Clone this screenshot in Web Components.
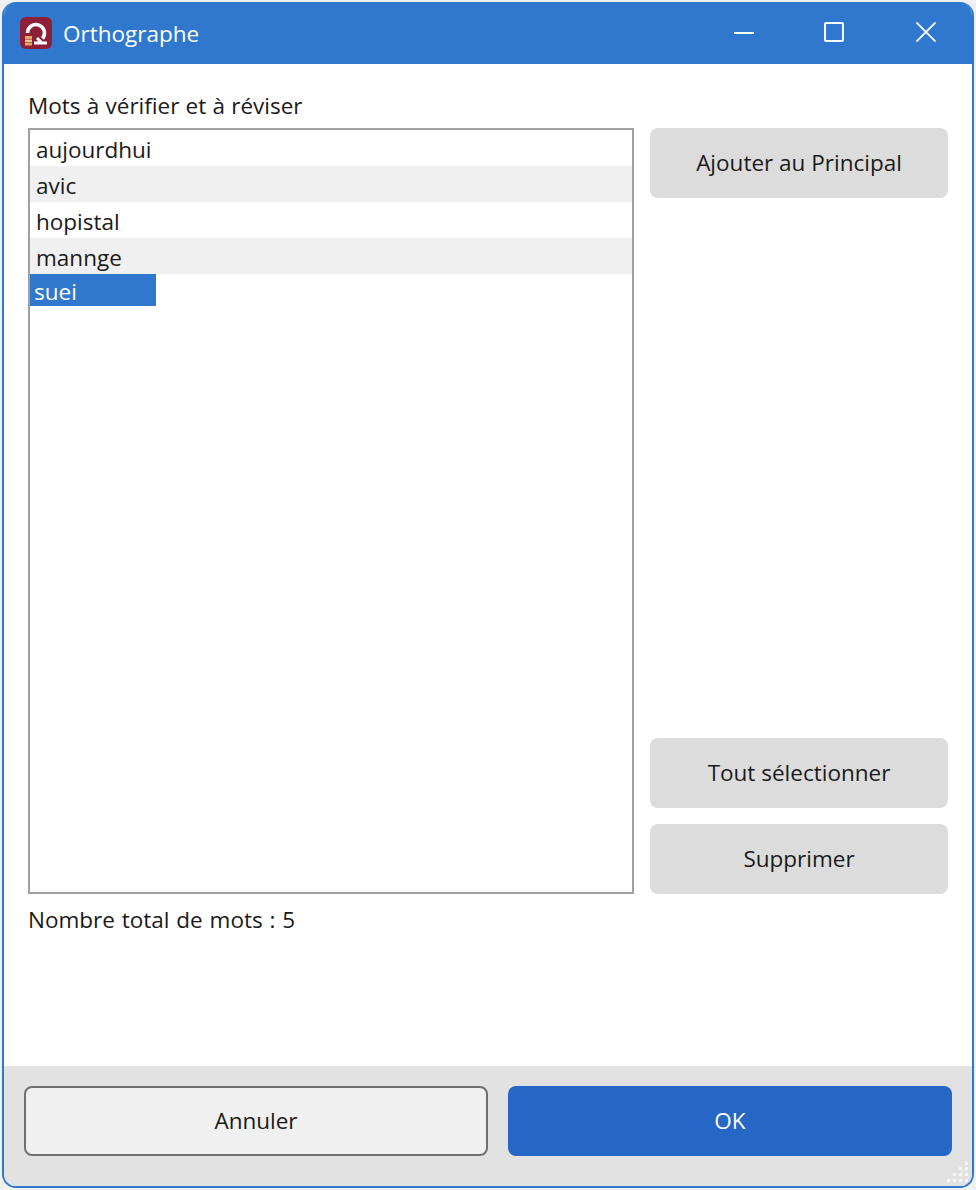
<!DOCTYPE html>
<html lang="fr">
<head>
<meta charset="utf-8">
<title>Orthographe</title>
<style>
    html, body {
        background-color: #f0f0f0;
        height: 100%;
        margin: 0;
    }

    body {
        color: #1a1a1a;
        font-family: "Open Sans", "Noto Sans", sans-serif;
        font-size: 22.5px;
        overflow: hidden;
    }
</style>
</head>
<body>
<spell-dialog></spell-dialog>

<script>
const words = ["aujourdhui", "avic", "hopistal", "mannge", "suei"];

class TitleBar extends HTMLElement {
    constructor(){
        super();
        const shadow = this.attachShadow({ mode: "open" });
        shadow.innerHTML = `
        <style>
        :host{
            align-items: center;
            background-color: #2f78cd;
            color: white;
            display: flex;
            flex: none;
            height: 62px;
            padding-left: 16px;
        }
        .logo{
            flex: none;
            height: 32px;
            margin-right: 11px;
            width: 32px;
        }
        .title{
            flex-grow: 1;
        }
        .window-button{
            display: block;
            height: 20px;
            width: 20px;
        }
        .window-buttons{
            display: flex;
            margin-bottom: 2px;
            margin-right: 36px;
        }
        .window-buttons svg + svg{
            margin-left: 70px;
        }
        .window-buttons svg:last-child{
            margin-left: 72px;
        }
        </style>
        <svg class="logo" viewBox="0 0 32 32">
            <rect width="32" height="32" rx="6" fill="#8f1f36"/>
            <path d="M7.500 16a8.500 8.500 0 1 1 15 5.500" fill="none" stroke="white" stroke-width="3.500"/>
            <path d="M14 26h13M17 21l5 5" fill="none" stroke="white" stroke-width="3"/>
            <rect x="5" y="19" width="7" height="3" fill="#e2a95c"/>
            <rect x="5" y="22.500" width="7" height="2.500" fill="#edc48c"/>
            <rect x="5" y="25.500" width="7" height="3" fill="#e2a95c"/>
        </svg>
        <span class="title"><slot></slot></span>
        <div class="window-buttons">
            <svg class="window-button" viewBox="0 0 20 20"><path d="M0 11h20" stroke="white" stroke-width="2"/></svg>
            <svg class="window-button" viewBox="0 0 20 20"><rect x="1" y="1" width="18" height="18" rx="1" fill="none" stroke="white" stroke-width="2"/></svg>
            <svg class="window-button" viewBox="0 0 20 20"><path d="M0.500 0.500l19 19M19.500 0.500l-19 19" stroke="white" stroke-width="1.800"/></svg>
        </div>`;
    }
}

class WordList extends HTMLElement {
    constructor(){
        super();
        const shadow = this.attachShadow({ mode: "open" });
        shadow.innerHTML = `
        <style>
        :host{
            background-color: white;
            border: 2px solid #a0a0a0;
            box-sizing: border-box;
            display: block;
            flex: none;
            height: 766px;
            width: 606px;
        }
        </style>
        <slot></slot>`;
    }
}

class WordItem extends HTMLElement {
    constructor(){
        super();
        const shadow = this.attachShadow({ mode: "open" });
        shadow.innerHTML = `
        <style>
        :host{
            align-items: center;
            box-sizing: border-box;
            display: flex;
            height: 36px;
            padding: 3px 0 0 6px;
        }
        :host(:nth-child(even)){
            background-color: #f0f0f0;
        }
        :host([selected]){
            background-color: #2f78cd;
            color: white;
            height: 32px;
            padding-left: 4px;
            width: 126px;
        }
        </style>
        <slot></slot>`;
    }
}

class UiButton extends HTMLElement {
    constructor(){
        super();
        const shadow = this.attachShadow({ mode: "open" });
        shadow.innerHTML = `
        <style>
        :host{
            align-items: center;
            background-color: #dcdcdc;
            border-radius: 8px;
            box-sizing: border-box;
            display: flex;
            height: 70px;
            justify-content: center;
            padding-bottom: 1px;
        }
        :host([kind="cancel"]){
            background-color: #f0f0f0;
            border: 2px solid #707070;
        }
        :host([kind="primary"]){
            background-color: #2667c6;
            color: white;
        }
        </style>
        <slot></slot>`;
    }
}

class SpellDialog extends HTMLElement {
    constructor(){
        super();
        const shadow = this.attachShadow({ mode: "open" });
        shadow.innerHTML = `
        <style>
        :host{
            background-color: white;
            border: solid #2f78cd;
            border-radius: 14px;
            border-width: 0 2px 2px 2px;
            box-sizing: border-box;
            display: flex;
            flex-direction: column;
            height: 1186px;
            margin: 2px 2px 0 2px;
            overflow: hidden;
            width: 972px;
        }
        .content{
            display: flex;
            flex-direction: column;
            flex-grow: 1;
            padding: 26px 24px 0 24px;
        }
        .list-label{
            height: 36px;
            line-height: 28px;
            margin-top: 2px;
            word-spacing: 0.4px;
        }
        .columns{
            display: flex;
            gap: 16px;
        }
        .actions{
            display: flex;
            flex-direction: column;
            gap: 16px;
            width: 298px;
        }
        .spacer{
            flex-grow: 1;
        }
        .word-count{
            line-height: 28px;
            margin-top: 12px;
            word-spacing: 1px;
        }
        .footer{
            background-color: #e2e2e2;
            box-sizing: border-box;
            display: flex;
            flex: none;
            gap: 20px;
            height: 120px;
            padding: 20px 20px 0 20px;
            position: relative;
        }
        .footer ui-button:first-child{
            width: 464px;
        }
        .footer ui-button:nth-child(2){
            width: 444px;
        }
        .grip{
            bottom: 3px;
            height: 24px;
            position: absolute;
            right: 2px;
            width: 24px;
        }
        </style>
        <title-bar>Orthographe</title-bar>
        <div class="content">
            <div class="list-label">Mots à vérifier et à réviser</div>
            <div class="columns">
                <word-list id="list"></word-list>
                <div class="actions">
                    <ui-button>Ajouter au Principal</ui-button>
                    <div class="spacer"></div>
                    <ui-button>Tout sélectionner</ui-button>
                    <ui-button>Supprimer</ui-button>
                </div>
            </div>
            <div class="word-count">Nombre total de mots : 5</div>
        </div>
        <div class="footer">
            <ui-button kind="cancel">Annuler</ui-button>
            <ui-button kind="primary">OK</ui-button>
            <svg class="grip" viewBox="0 0 24 24" fill="#f4f6fa">
                <rect x="19" y="3" width="3" height="3"/>
                <rect x="13" y="8" width="3" height="3"/><rect x="19" y="8" width="3" height="3"/>
                <rect x="7" y="14" width="3" height="3"/><rect x="13" y="14" width="3" height="3"/><rect x="19" y="14" width="3" height="3"/>
                <rect x="1" y="20" width="3" height="3"/><rect x="7" y="20" width="3" height="3"/><rect x="13" y="20" width="3" height="3"/><rect x="19" y="20" width="3" height="3"/>
            </svg>
        </div>`;

        const list = shadow.querySelector("#list");
        words.forEach((word, index)=>{
            const item = document.createElement("word-item");
            item.textContent = word;
            if(index === words.length - 1){
                item.setAttribute("selected", "");
            }
            list.appendChild(item);
        });
    }
}

customElements.define("title-bar", TitleBar);
customElements.define("word-list", WordList);
customElements.define("word-item", WordItem);
customElements.define("ui-button", UiButton);
customElements.define("spell-dialog", SpellDialog);
</script>
</body>
</html>
